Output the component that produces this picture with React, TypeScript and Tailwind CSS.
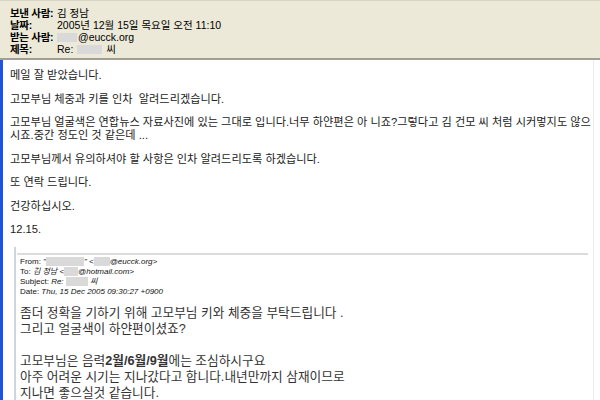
const font = 'font-["Liberation_Sans","Noto_Sans_CJK_KR",sans-serif]';

function Redact({ w }: { w: string }) {
    return <span className={`inline-block h-[9px] align-middle bg-[#d9d9d9] ${w}`} />;
}

const headerRows: { label: string; value: React.ReactNode }[] = [
    { label: '보낸 사람:', value: '김 정남' },
    { label: '날짜:', value: '2005년 12월 15일 목요일 오전 11:10' },
    { label: '받는 사람:', value: <><Redact w="w-[20px]" />@eucck.org</> },
    { label: '제목:', value: <>Re: <Redact w="w-[25px]" /> 씨</> },
];

const paragraphs: React.ReactNode[] = [
    '메일 잘 받았습니다.',
    '고모부님 체중과 키를 인차  알려드리겠습니다.',
    <>고모부님 얼굴색은 연합뉴스 자료사진에 있는 그대로 입니다.너무 하얀편은 아 니죠?그렇다고 김 건모 씨 처럼 시커멓지도 않으<br />시죠.중간 정도인 것 같은데 ...</>,
    '고모부님께서 유의하셔야 할 사항은 인차 알려드리도록 하겠습니다.',
    '또 연락 드립니다.',
    '건강하십시오.',
    '12.15.',
];

export default function App() {
    return (
        <div className={`w-[600px] h-[400px] overflow-hidden bg-white flex flex-col text-black ${font}`}>
            {/* message header */}
            <div className="h-[60px] shrink-0 bg-[#ece9d8] border-t border-[#d6d3c4] border-b-2 border-b-[#a19f92] pt-[6px] pl-[10px]">
                {headerRows.map(({ label, value }) => (
                    <div key={label} className="flex h-[12px] items-center text-[10.5px] leading-[12px]">
                        <span className="w-[47px] font-bold tracking-[-0.3px]">{label}</span>
                        <span className="flex items-center gap-[1px] whitespace-pre">{value}</span>
                    </div>
                ))}
            </div>

            {/* message body */}
            <div className="flex flex-1 min-h-0">
                <div className="w-[3px] shrink-0 bg-[#1f54d8]" />
                <div className="flex-1 min-w-0 pl-[7px] pt-[9px] text-[11.2px] leading-[13px] text-[#222]">
                    {paragraphs.map((p, i) => (
                        <p key={i} className="mb-[10.5px] whitespace-pre">{p}</p>
                    ))}

                    {/* quoted original */}
                    <div className="ml-[4px] border-l-2 border-[#cfd5e0] pt-[6px] pl-[1px] mr-[5px]">
                        <div className="h-[2px] bg-[#dcdcdc]" />
                        <div className="pl-[3px] pt-[2px] text-[8px] leading-[10px] text-[#111]">
                            <div>From: <i>"<Redact w="w-[38px]" />" &lt;<Redact w="w-[16px]" />@eucck.org&gt;</i></div>
                            <div>To: <i>김 정남 &lt;<Redact w="w-[14px]" />@hotmail.com&gt;</i></div>
                            <div>Subject: <i>Re: <Redact w="w-[22px]" /> 씨</i></div>
                            <div>Date: <i>Thu, 15 Dec 2005 09:30:27 +0900</i></div>
                        </div>
                        <div className="pl-[3px] pt-[8px] text-[12.7px] leading-[16px] text-[#333]">
                            <p>좀더 정확을 기하기 위해 고모부님 키와 체중을 부탁드립니다 .</p>
                            <p>그리고 얼굴색이 하얀편이셨죠?</p>
                            <p className="mt-[16px]">고모부님은 음력<b>2월/6월/9월</b>에는 조심하시구요</p>
                            <p>아주 어려운 시기는 지나갔다고 합니다.내년만까지 삼재이므로</p>
                            <p>지나면 좋으실것 같습니다.</p>
                        </div>
                    </div>
                </div>
                <div className="w-[7px] shrink-0 border-l border-[#ececec]" />
            </div>
        </div>
    );
}
